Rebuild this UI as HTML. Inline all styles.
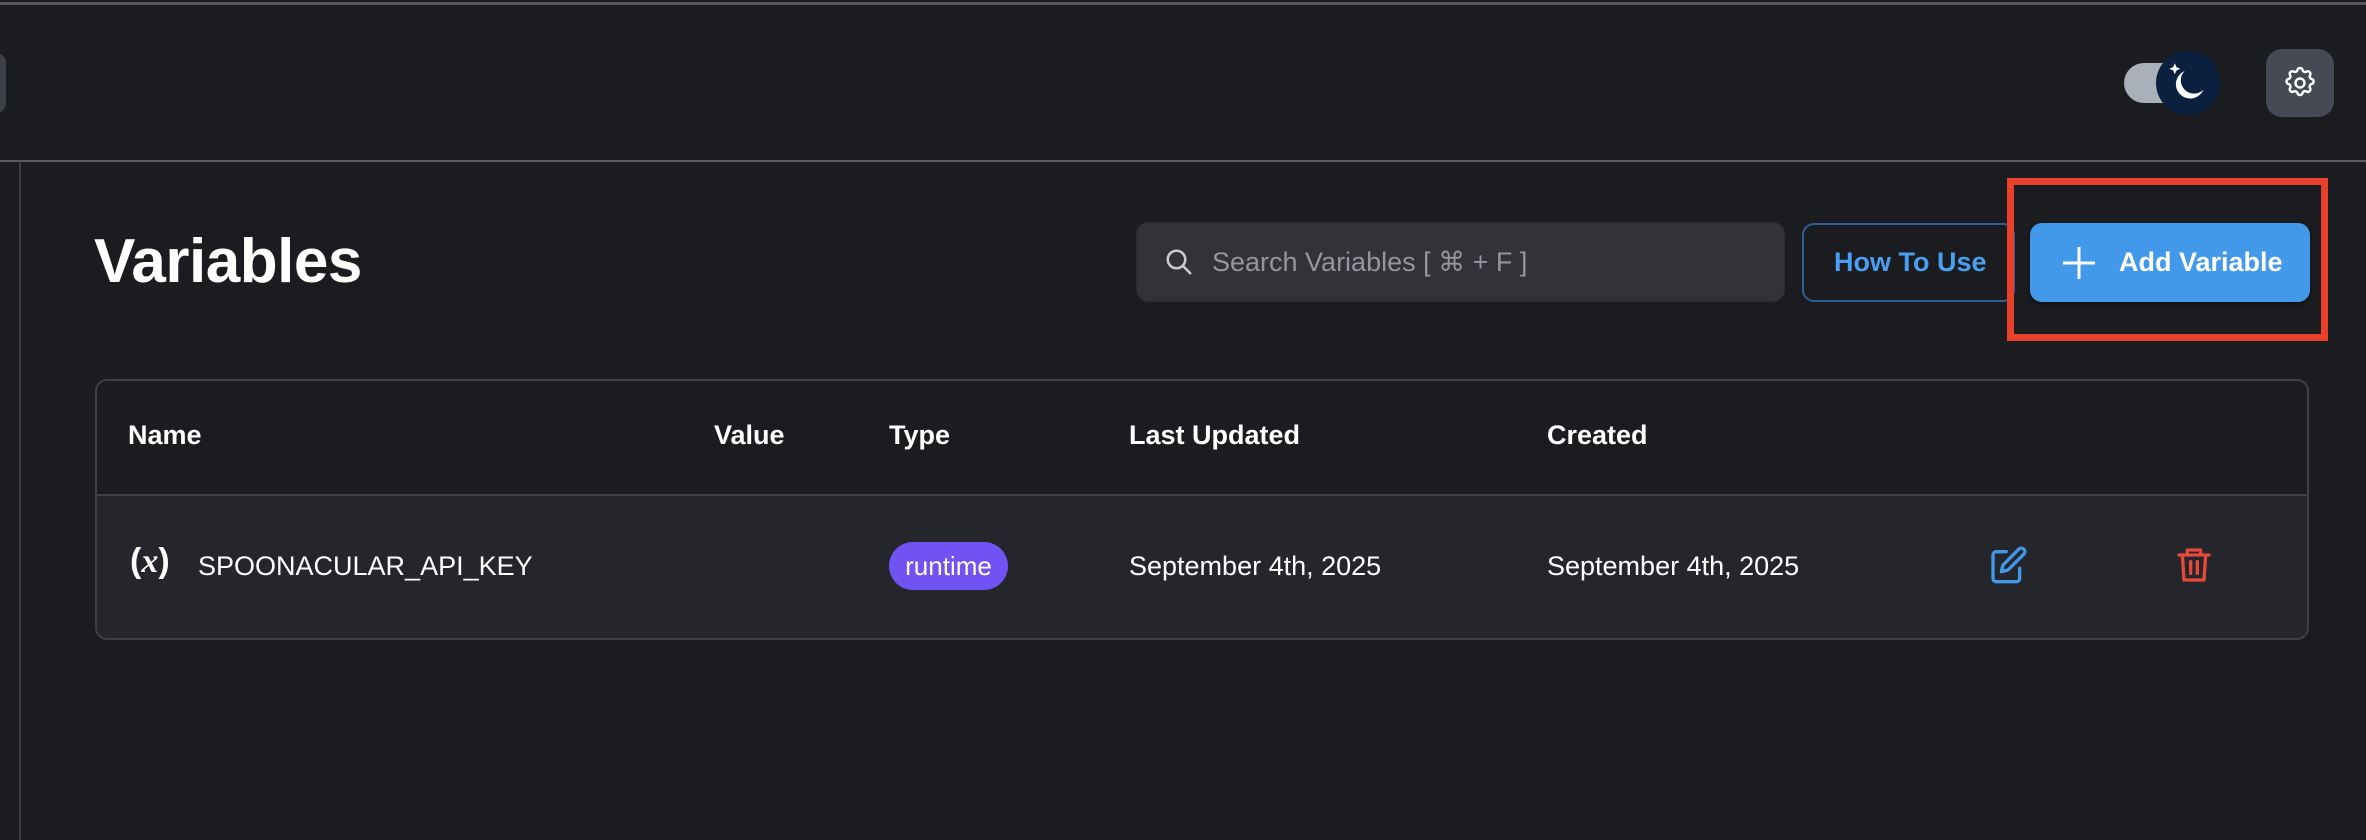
<!DOCTYPE html>
<html><head><meta charset="utf-8"><style>
*{margin:0;padding:0;box-sizing:border-box}
body{width:2366px;height:840px;background:#1b1c20;font-family:"Liberation Sans",sans-serif;position:relative;overflow:hidden;color:#fff}
.abs{position:absolute}
</style></head><body>
<div class="abs" style="left:0;top:2px;width:2366px;height:3px;background:#55565b"></div>
<div class="abs" style="left:0;top:160px;width:2366px;height:2px;background:#5a5b60"></div>
<div class="abs" style="left:19px;top:162px;width:2px;height:678px;background:#3c3d42"></div>
<div class="abs" style="left:-14px;top:53px;width:20px;height:60px;border-radius:10px;background:#3d4049"></div>
<!-- toggle -->
<div class="abs" style="left:2124px;top:63px;width:60px;height:40px;border-radius:20px;background:#a9b0b9"></div>
<div class="abs" style="left:2156px;top:51px;width:64px;height:64px;border-radius:50%;background:#0b1f3e"></div>
<svg class="abs" style="left:2166px;top:60px" width="44" height="44" viewBox="0 0 40 40"><path d="M8 3l1.5 3.5 3.5 1.5-3.5 1.5L8 13 6.5 9.5 3 8l3.5-1.5z" fill="#fff"/><path d="M17 10a13 13 0 1 0 17 17A11 11 0 0 1 17 10z" fill="#fff"/></svg>
<!-- gear -->
<div class="abs" style="left:2266px;top:49px;width:68px;height:68px;border-radius:16px;background:#464a55"></div>
<svg class="abs" style="left:2282px;top:65px" width="36" height="36" viewBox="0 0 24 24" fill="none" stroke="#fff" stroke-width="1.6" stroke-linejoin="round"><path d="M10.3 3.3c.4-1.7 3-1.7 3.4 0a1.7 1.7 0 0 0 2.6 1.1c1.5-.9 3.3.8 2.4 2.4a1.7 1.7 0 0 0 1 2.5c1.8.4 1.8 3 0 3.4a1.7 1.7 0 0 0-1 2.6c.9 1.5-.9 3.3-2.4 2.4a1.7 1.7 0 0 0-2.6 1c-.4 1.8-3 1.8-3.4 0a1.7 1.7 0 0 0-2.5-1c-1.6.9-3.3-.9-2.4-2.4a1.7 1.7 0 0 0-1.1-2.6c-1.7-.4-1.7-3 0-3.4a1.7 1.7 0 0 0 1.1-2.5c-.9-1.6.8-3.3 2.4-2.4a1.7 1.7 0 0 0 2.5-1.1z"/><circle cx="12" cy="12" r="3"/></svg>
<!-- title -->
<div class="abs" style="left:94px;top:226px;font-size:62px;font-weight:bold;letter-spacing:-0.5px">Variables</div>
<!-- search -->
<div class="abs" style="left:1136px;top:222px;width:649px;height:80px;border-radius:12px;background:#323339;border:1px solid #2a2b30"></div>
<svg class="abs" style="left:1164px;top:247px" width="30" height="30" viewBox="0 0 24 24" fill="none" stroke="#c9cbd0" stroke-width="2" stroke-linecap="round"><circle cx="10" cy="10" r="7"/><path d="M15 15l6 6"/></svg>
<div class="abs" style="left:1212px;top:247px;font-size:27px;color:#94969c">Search Variables [ ⌘ + F ]</div>
<!-- how to use -->
<div class="abs" style="left:1802px;top:223px;width:213px;height:79px;border-radius:12px;border:2px solid #2f5f96"></div>
<div class="abs" style="left:1834px;top:247px;font-size:27px;font-weight:bold;color:#4a9ff0">How To Use</div>
<!-- add -->
<div class="abs" style="left:2030px;top:223px;width:280px;height:79px;border-radius:12px;background:#4299e9;box-shadow:0 2px 4px rgba(0,0,0,.5)"></div>
<svg class="abs" style="left:2061px;top:245px" width="36" height="36" viewBox="0 0 36 36" stroke="#fff" stroke-width="3"><path d="M18 2v32M2 18h32"/></svg>
<div class="abs" style="left:2119px;top:247px;font-size:27px;font-weight:bold">Add Variable</div>
<div class="abs" style="left:2007px;top:178px;width:321px;height:163px;border:7px solid #e8402a"></div>
<!-- table -->
<div class="abs" style="left:95px;top:379px;width:2214px;height:261px;border:2px solid #3e4046;border-radius:12px;overflow:hidden">
<div style="position:absolute;left:0;top:113px;width:100%;height:146px;background:#25262b;border-top:2px solid #3e4046"></div>
</div>
<div class="abs" style="top:420px;font-size:27px;font-weight:bold;left:128px">Name</div>
<div class="abs" style="top:420px;font-size:27px;font-weight:bold;left:714px">Value</div>
<div class="abs" style="top:420px;font-size:27px;font-weight:bold;left:889px">Type</div>
<div class="abs" style="top:420px;font-size:27px;font-weight:bold;left:1129px">Last Updated</div>
<div class="abs" style="top:420px;font-size:27px;font-weight:bold;left:1547px">Created</div>
<div class="abs" style="top:542px;left:130px;font-size:34px;font-family:'Liberation Serif',serif;font-weight:bold"><span style="font-family:'Liberation Sans'">(</span><i>x</i><span style="font-family:'Liberation Sans'">)</span></div>
<div class="abs" style="top:551px;left:198px;font-size:27px">SPOONACULAR_API_KEY</div>
<div class="abs" style="top:542px;left:889px;width:119px;height:48px;border-radius:24px;background:#7152f3;font-size:26px;text-align:center;line-height:48px">runtime</div>
<div class="abs" style="top:551px;left:1129px;font-size:27px">September 4th, 2025</div>
<div class="abs" style="top:551px;left:1547px;font-size:27px">September 4th, 2025</div>
<svg class="abs" style="left:1988px;top:545px" width="40" height="40" viewBox="0 0 24 24" fill="none" stroke="#4299e9" stroke-width="2" stroke-linecap="round" stroke-linejoin="round"><path d="M11 4H5a2 2 0 0 0-2 2v14a2 2 0 0 0 2 2h12a2 2 0 0 0 2-2v-6"/><path d="M18.5 2.5a2.1 2.1 0 0 1 3 3L12 15l-4 1 1-4z"/></svg>
<svg class="abs" style="left:2174px;top:545px" width="40" height="40" viewBox="0 0 24 24" fill="none" stroke="#e5493a" stroke-width="2" stroke-linecap="round" stroke-linejoin="round"><path d="M3 6h18M8 6V3h8v3M5 6l1 15h12l1-15M10 10v7M14 10v7"/></svg>
</body></html>
